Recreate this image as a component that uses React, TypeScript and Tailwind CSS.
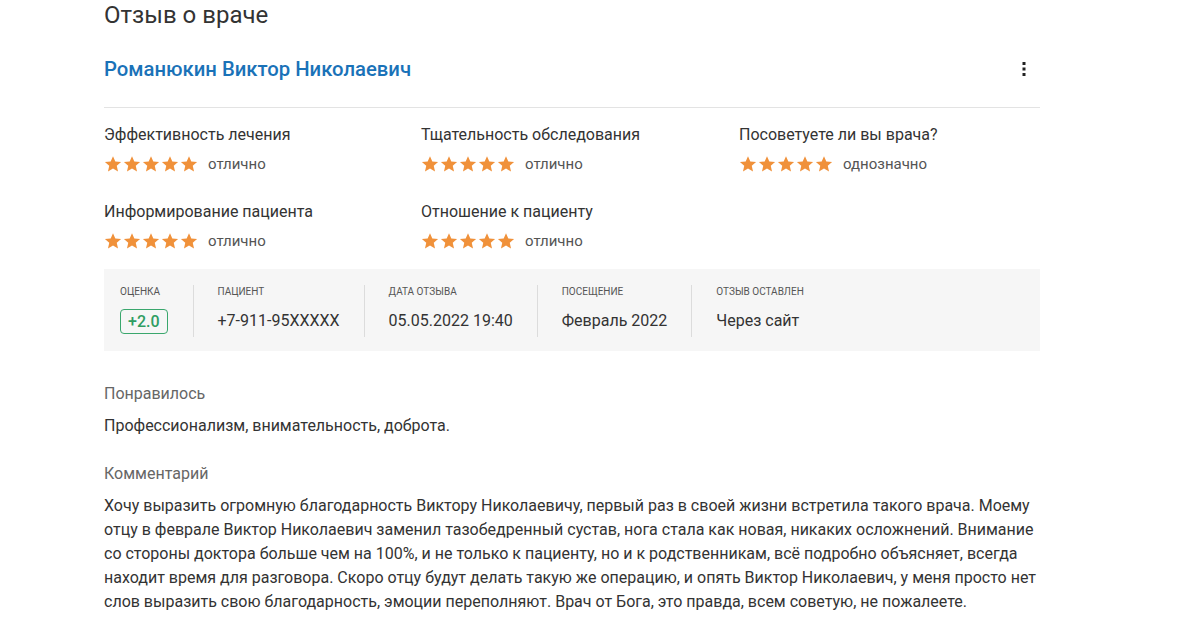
const ratings = [
  { label: 'Эффективность лечения', value: 'отлично' },
  { label: 'Тщательность обследования', value: 'отлично' },
  { label: 'Посоветуете ли вы врача?', value: 'однозначно' },
  { label: 'Информирование пациента', value: 'отлично' },
  { label: 'Отношение к пациенту', value: 'отлично' },
]

const info = [
  { label: 'Пациент', value: '+7-911-95XXXXX' },
  { label: 'Дата отзыва', value: '05.05.2022 19:40' },
  { label: 'Посещение', value: 'Февраль 2022' },
  { label: 'Отзыв оставлен', value: 'Через сайт' },
]

const Star = () => (
  <svg width="18" height="18" viewBox="0 0 24 24" className="fill-[#f0913a]">
    <path d="M12 1.5l3.1 7.1 7.7.7-5.8 5.1 1.7 7.6L12 18l-6.7 4 1.7-7.6-5.8-5.1 7.7-.7z" />
  </svg>
)

const Stars = ({ text }: { text: string }) => (
  <div className="flex items-center h-5 mt-[7px]">
    <div className="flex gap-px">
      {[0, 1, 2, 3, 4].map((i) => (
        <Star key={i} />
      ))}
    </div>
    <span className="ml-[10px] text-[15px] leading-5 text-[#555]">{text}</span>
  </div>
)

const App = () => {
  return (
    <div className="min-h-screen bg-white font-['Roboto',sans-serif] text-[#333]">
      <div className="ml-[104px] w-[936px]">
        <h1 className="text-[24px] leading-[30px] font-normal text-[#333]">Отзыв о враче</h1>

        <div className="mt-[23px] flex items-center justify-between">
          <a href="#" className="text-[20.3px] leading-7 font-medium text-[#1a72b8]">
            Романюкин Виктор Николаевич
          </a>
          <button className="w-8 h-8 flex items-center justify-center">
            <svg width="4" height="16" viewBox="0 0 4 16" className="fill-[#222]">
              <rect x="0.5" y="1" width="3" height="3" />
              <rect x="0.5" y="6.5" width="3" height="3" />
              <rect x="0.5" y="12" width="3" height="3" />
            </svg>
          </button>
        </div>

        <div className="mt-[22px] border-t border-[#e3e3e3]" />

        <div className="grid grid-cols-[317px_318px_1fr] gap-y-[26px] pt-[15px]">
          {ratings.map((r) => (
            <div key={r.label}>
              <div className="text-base leading-6 text-[#333]">{r.label}</div>
              <Stars text={r.value} />
            </div>
          ))}
        </div>

        <div className="mt-[18px] bg-[#f6f6f6] flex pl-4 pt-4 pb-[14px]">
          <div className="pr-[25px] border-r border-[#dcdcdc]">
            <div className="text-[10px] leading-[14px] uppercase text-[#555]">Оценка</div>
            <div className="mt-[10px] inline-flex h-[25px] items-center px-[7px] border border-[#3aa76d] rounded text-[#2f9d62] font-medium text-base">
              +2.0
            </div>
          </div>
          {info.map((item, i) => (
            <div key={item.label} className={i < info.length - 1 ? 'px-6 border-r border-[#dcdcdc]' : 'px-6'}>
              <div className="text-[10px] leading-[14px] uppercase text-[#555]">{item.label}</div>
              <div className="mt-[10px] h-[28px] text-base leading-6 text-[#333]">{item.value}</div>
            </div>
          ))}
        </div>

        <div className="mt-[31px] text-base leading-6 text-[#666]">Понравилось</div>
        <p className="mt-2 text-base leading-6 text-[#333]">Профессионализм, внимательность, доброта.</p>

        <div className="mt-6 text-base leading-6 text-[#666]">Комментарий</div>
        <p className="mt-2 text-base leading-6 text-[#333]">
          Хочу выразить огромную благодарность Виктору Николаевичу, первый раз в своей жизни встретила такого врача. Моему
          отцу в феврале Виктор Николаевич заменил тазобедренный сустав, нога стала как новая, никаких осложнений. Внимание
          со стороны доктора больше чем на 100%, и не только к пациенту, но и к родственникам, всё подробно объясняет, всегда
          находит время для разговора. Скоро отцу будут делать такую же операцию, и опять Виктор Николаевич, у меня просто нет
          слов выразить свою благодарность, эмоции переполняют. Врач от Бога, это правда, всем советую, не пожалеете.
        </p>
      </div>
    </div>
  )
}

export default App
